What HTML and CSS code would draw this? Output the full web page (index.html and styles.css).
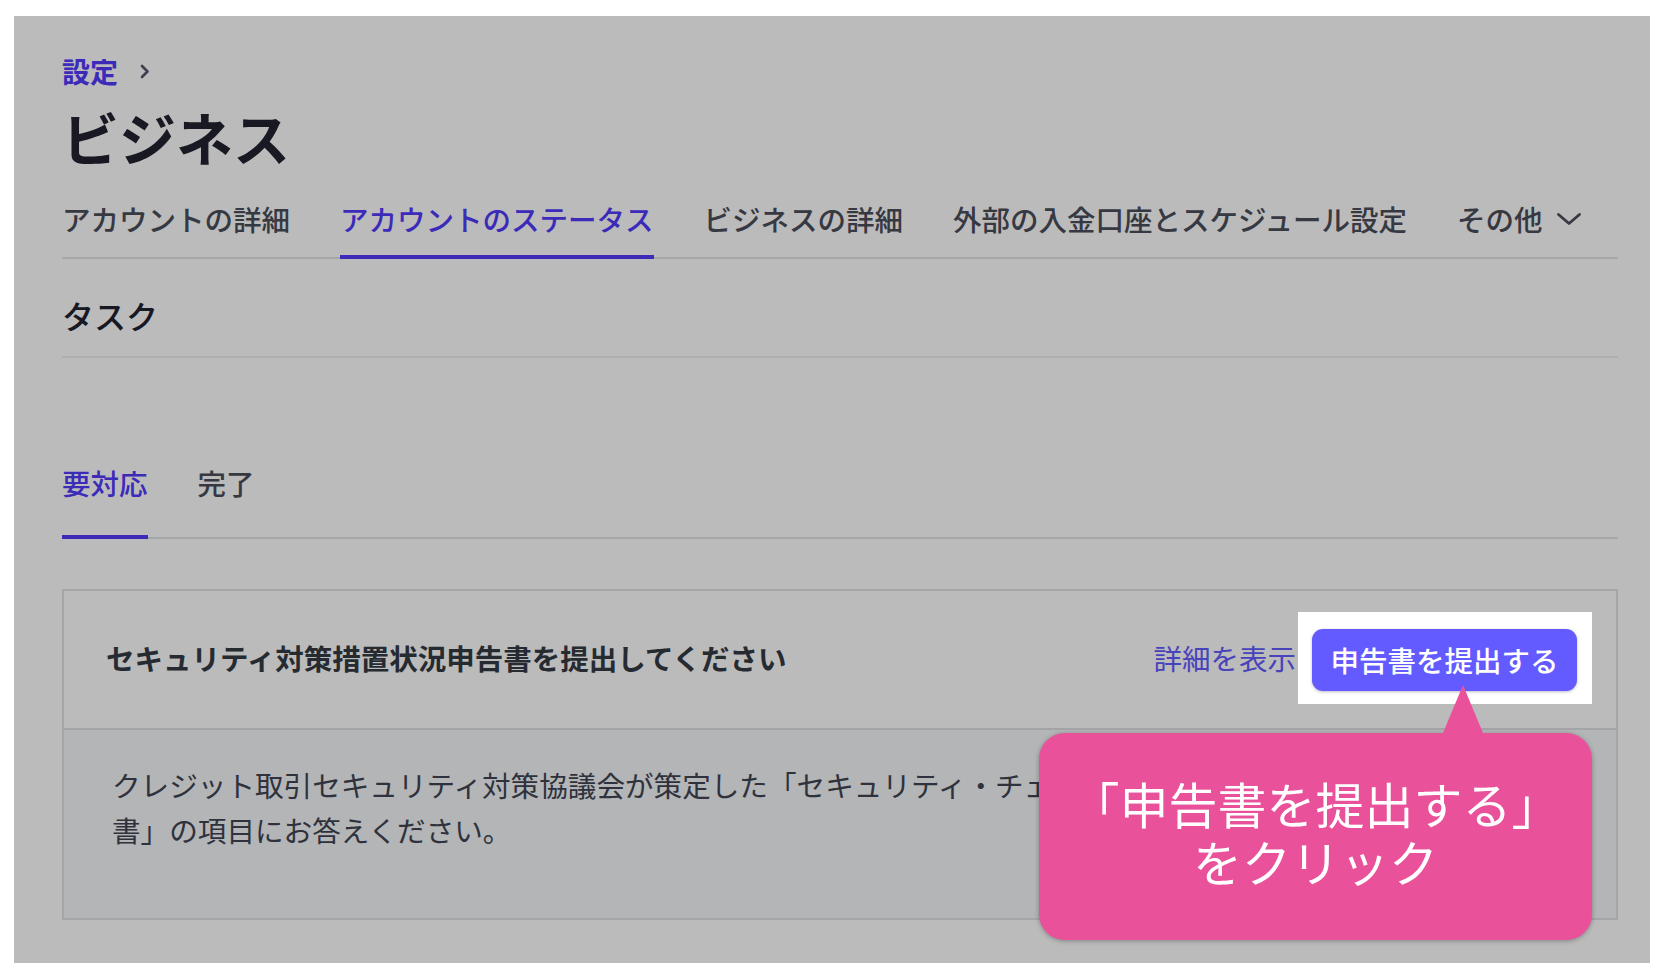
FILE: index.html
```html
<!DOCTYPE html>
<html lang="ja">
<head>
<meta charset="utf-8">
<title>ビジネス設定</title>
<link rel="stylesheet" href="styles.css">
</head>
<body>
<div class="frame">
  <main class="page">
    <nav class="crumbs">
      <a class="crumb-link">設定</a>
      <svg class="crumb-chevron" width="10" height="15" viewBox="0 0 10 15"><path d="M2 2 L7.5 7.5 L2 13" fill="none" stroke="currentColor" stroke-width="2.6" stroke-linecap="round" stroke-linejoin="round"/></svg>
    </nav>
    <h1 class="title">ビジネス</h1>
    <div class="tabs">
      <span class="tab">アカウントの詳細</span>
      <span class="tab active">アカウントのステータス</span>
      <span class="tab">ビジネスの詳細</span>
      <span class="tab">外部の入金口座とスケジュール設定</span>
      <span class="tab more">その他<svg class="more-chevron" width="26" height="14" viewBox="0 0 26 14"><path d="M2.5 2.5 L13 11.5 L23.5 2.5" fill="none" stroke="currentColor" stroke-width="2.8" stroke-linecap="round" stroke-linejoin="round"/></svg></span>
    </div>
    <h2 class="section">タスク</h2>
    <div class="subtabs">
      <span class="subtab active">要対応</span>
      <span class="subtab">完了</span>
    </div>
    <section class="card">
      <div class="card-head">
        <h3 class="card-title">セキュリティ対策措置状況申告書を提出してください</h3>
        <div class="actions">
          <a class="detail-link">詳細を表示</a>
          <div class="spot"><button class="primary">申告書を提出する</button></div>
        </div>
      </div>
      <div class="card-body">
        <p class="desc">クレジット取引セキュリティ対策協議会が策定した「セキュリティ・チェックリスト」に基づく申告<br>書」の項目にお答えください。</p>
      </div>
    </section>
  </main>
  <div class="callout">「申告書を提出する」<br>をクリック</div>
</div>
</body>
</html>
```

FILE: styles.css
```css
* { box-sizing: border-box; }
html, body { margin: 0; padding: 0; background: #ffffff; }
body {
  width: 1664px;
  height: 980px;
  overflow: hidden;
  font-family: "Noto Sans CJK JP", "Noto Sans", sans-serif;
}
.frame {
  position: relative;
  margin: 16px 14px 0 14px;
  width: 1636px;
  height: 947px;
  overflow: hidden;
  background: #ffffff;
}
.page {
  padding: 37px 32px 0 48px;
}
.crumbs {
  display: flex;
  align-items: center;
  height: 36px;
}
.crumb-link {
  font-size: 28px;
  line-height: 36px;
  font-weight: 700;
  color: #533afd;
}
.crumb-chevron {
  margin-left: 22px;
  color: #545969;
}
.title {
  margin: 15px 0 0 0;
  font-size: 57px;
  line-height: 64px;
  font-weight: 700;
  color: #212330;
}
.tabs {
  margin-top: 33px;
  display: flex;
  gap: 50px;
  box-shadow: inset 0 -2px 0 #e2e5ea;
}
.tab {
  display: flex;
  align-items: center;
  font-size: 28.5px;
  line-height: 36px;
  font-weight: 500;
  color: #4a4e5a;
  padding-bottom: 18px;
  border-bottom: 4px solid transparent;
}
.tab.active {
  color: #533afd;
  border-bottom-color: #533afd;
}
.more-chevron {
  margin-left: 13px;
  color: #4a4e5a;
}
.section {
  margin: 36px 0 0 0;
  font-size: 32px;
  line-height: 40px;
  font-weight: 500;
  color: #212330;
  padding-bottom: 21px;
  border-bottom: 2px solid #ebeef1;
}
.subtabs {
  margin-top: 107px;
  display: flex;
  gap: 50px;
  box-shadow: inset 0 -2px 0 #e2e5ea;
}
.subtab {
  font-size: 28.5px;
  line-height: 36px;
  font-weight: 500;
  color: #4a4e5a;
  padding-bottom: 34px;
  border-bottom: 4px solid transparent;
}
.subtab.active {
  color: #533afd;
  border-bottom-color: #533afd;
}
.card {
  margin-top: 50px;
  border: 2px solid #e0e3e8;
}
.card-head {
  display: flex;
  align-items: center;
  justify-content: space-between;
  padding: 21px 24px 24px 42px;
  border-bottom: 2px solid #dde0e6;
  background: #ffffff;
}
.card-title {
  margin: 0;
  font-size: 28.5px;
  line-height: 36px;
  font-weight: 700;
  color: #353a44;
}
.actions {
  display: flex;
  align-items: center;
}
.detail-link {
  font-size: 28.5px;
  line-height: 36px;
  color: #635bff;
  margin-right: 2px;
}
.spot {
  position: relative;
  z-index: 1;
  padding: 17px 15px 13px 14px;
  background: #ffffff;
  box-shadow: 0 0 0 3000px rgba(0, 0, 0, 0.267);
}
.primary {
  display: block;
  height: 62px;
  padding: 0 18.5px;
  border: 0;
  border-radius: 11px;
  background: #635bff;
  color: #ffffff;
  font-family: "Noto Sans CJK JP", "Noto Sans", sans-serif;
  font-size: 28.5px;
  line-height: 36px;
  font-weight: 500;
  box-shadow: 0 1px 3px rgba(30, 30, 80, 0.3);
}
.card-body {
  background: #f5f7fa;
  padding: 32px 48px 66px 48px;
}
.desc {
  margin: 0;
  font-size: 28.6px;
  line-height: 45px;
  color: #414552;
}
.callout {
  position: absolute;
  z-index: 2;
  left: 1025px;
  top: 717px;
  width: 553px;
  height: 207px;
  padding-bottom: 10px;
  display: flex;
  align-items: center;
  justify-content: center;
  text-align: center;
  background: #e9529b;
  border-radius: 26px;
  color: #ffffff;
  font-size: 49px;
  line-height: 58px;
  font-weight: 400;
  box-shadow: 0 1px 5px rgba(0, 0, 0, 0.3);
}
.callout::before {
  content: "";
  position: absolute;
  left: 404px;
  top: -48px;
  border-left: 20.5px solid transparent;
  border-right: 20.5px solid transparent;
  border-bottom: 48px solid #e9529b;
}
```
